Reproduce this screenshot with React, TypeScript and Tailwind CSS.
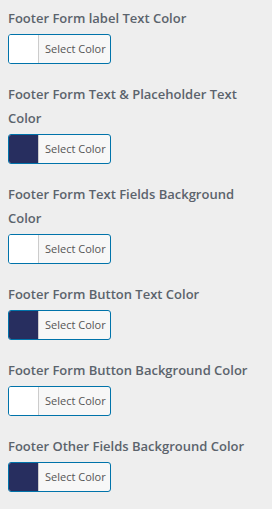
const fields = [
  { label: "Footer Form label Text Color", color: "#ffffff" },
  { label: "Footer Form Text & Placeholder Text Color", color: "#272e5f" },
  { label: "Footer Form Text Fields Background Color", color: "#ffffff" },
  { label: "Footer Form Button Text Color", color: "#272e5f" },
  { label: "Footer Form Button Background Color", color: "#ffffff" },
  { label: "Footer Other Fields Background Color", color: "#272e5f" },
];

function ColorControl({ label, color }: { label: string; color: string }) {
  return (
    <div className="mb-[18px]">
      <span className="block text-[13px] leading-[24px] font-semibold text-[#5b636c]">
        {label}
      </span>
      <button
        type="button"
        className="mt-1 flex h-[30px] w-[103px] overflow-hidden rounded-[3px] border border-[#0073aa] bg-[#f7f7f7]"
      >
        <span
          className="h-full w-[30px] border-r border-[#ccc]"
          style={{ background: color }}
        />
        <span className="flex-1 pl-[6px] text-left text-[11px] leading-[28px] text-[#555]">
          Select Color
        </span>
      </button>
    </div>
  );
}

export default function App() {
  return (
    <div
      className="min-h-[509px] w-[272px] bg-[#eeeeee] px-2 pt-[6px]"
      style={{ fontFamily: '"Open Sans", "Liberation Sans", sans-serif' }}
    >
      {fields.map((f) => (
        <ColorControl key={f.label} label={f.label} color={f.color} />
      ))}
    </div>
  );
}
